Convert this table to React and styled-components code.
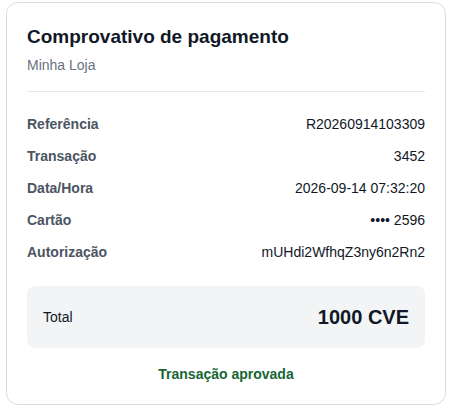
import React from "react";
import styled, { createGlobalStyle } from "styled-components";

const GlobalStyle = createGlobalStyle`
  body {
    margin: 0;
    background: #ffffff;
    font-family: "Liberation Sans", Arial, sans-serif;
  }
`;

const rows = [
  { label: "Referência", value: "R20260914103309" },
  { label: "Transação", value: "3452" },
  { label: "Data/Hora", value: "2026-09-14 07:32:20" },
  { label: "Cartão", value: "•••• 2596" },
  { label: "Autorização", value: "mUHdi2WfhqZ3ny6n2Rn2" },
];

const App = () => {
  return (
    <>
      <GlobalStyle />
      <Page>
        <Card>
          <Title>Comprovativo de pagamento</Title>
          <Store>Minha Loja</Store>
          <Divider />
          <List>
            {rows.map((row) => (
              <Row key={row.label}>
                <Label>{row.label}</Label>
                <Value>{row.value}</Value>
              </Row>
            ))}
          </List>
          <TotalBox>
            <TotalLabel>Total</TotalLabel>
            <TotalAmount>1000 CVE</TotalAmount>
          </TotalBox>
          <Status>Transação aprovada</Status>
        </Card>
      </Page>
    </>
  );
};

export default App;

const Page = styled.div`
  padding-top: 2px;
`;

const Card = styled.div`
  box-sizing: border-box;
  max-width: 440px;
  margin: 0 auto;
  padding: 20px;
  border: 1px solid #d9dde3;
  border-radius: 12px;
  background: #ffffff;
`;

const Title = styled.h1`
  margin: 0;
  font-size: 19px;
  line-height: 28px;
  font-weight: bold;
  color: #111827;
`;

const Store = styled.div`
  margin-top: 4px;
  font-size: 14px;
  line-height: 20px;
  color: #6b7280;
`;

const Divider = styled.hr`
  margin: 16px 0;
  border: 0;
  border-top: 1px solid #e5e7eb;
`;

const List = styled.div`
  display: flex;
  flex-direction: column;
`;

const Row = styled.div`
  display: flex;
  justify-content: space-between;
  align-items: center;
  padding: 6px 0;
  font-size: 14px;
  line-height: 20px;
`;

const Label = styled.span`
  font-weight: bold;
  color: #4b5563;
`;

const Value = styled.span`
  color: #111827;
`;

const TotalBox = styled.div`
  display: flex;
  justify-content: space-between;
  align-items: center;
  margin-top: 18px;
  padding: 16px;
  border-radius: 8px;
  background: #f3f4f6;
`;

const TotalLabel = styled.span`
  font-size: 14px;
  color: #111827;
`;

const TotalAmount = styled.span`
  font-size: 20px;
  line-height: 30px;
  font-weight: bold;
  color: #111827;
`;

const Status = styled.div`
  margin-top: 16px;
  text-align: center;
  font-size: 14px;
  line-height: 20px;
  font-weight: bold;
  color: #166534;
`;
